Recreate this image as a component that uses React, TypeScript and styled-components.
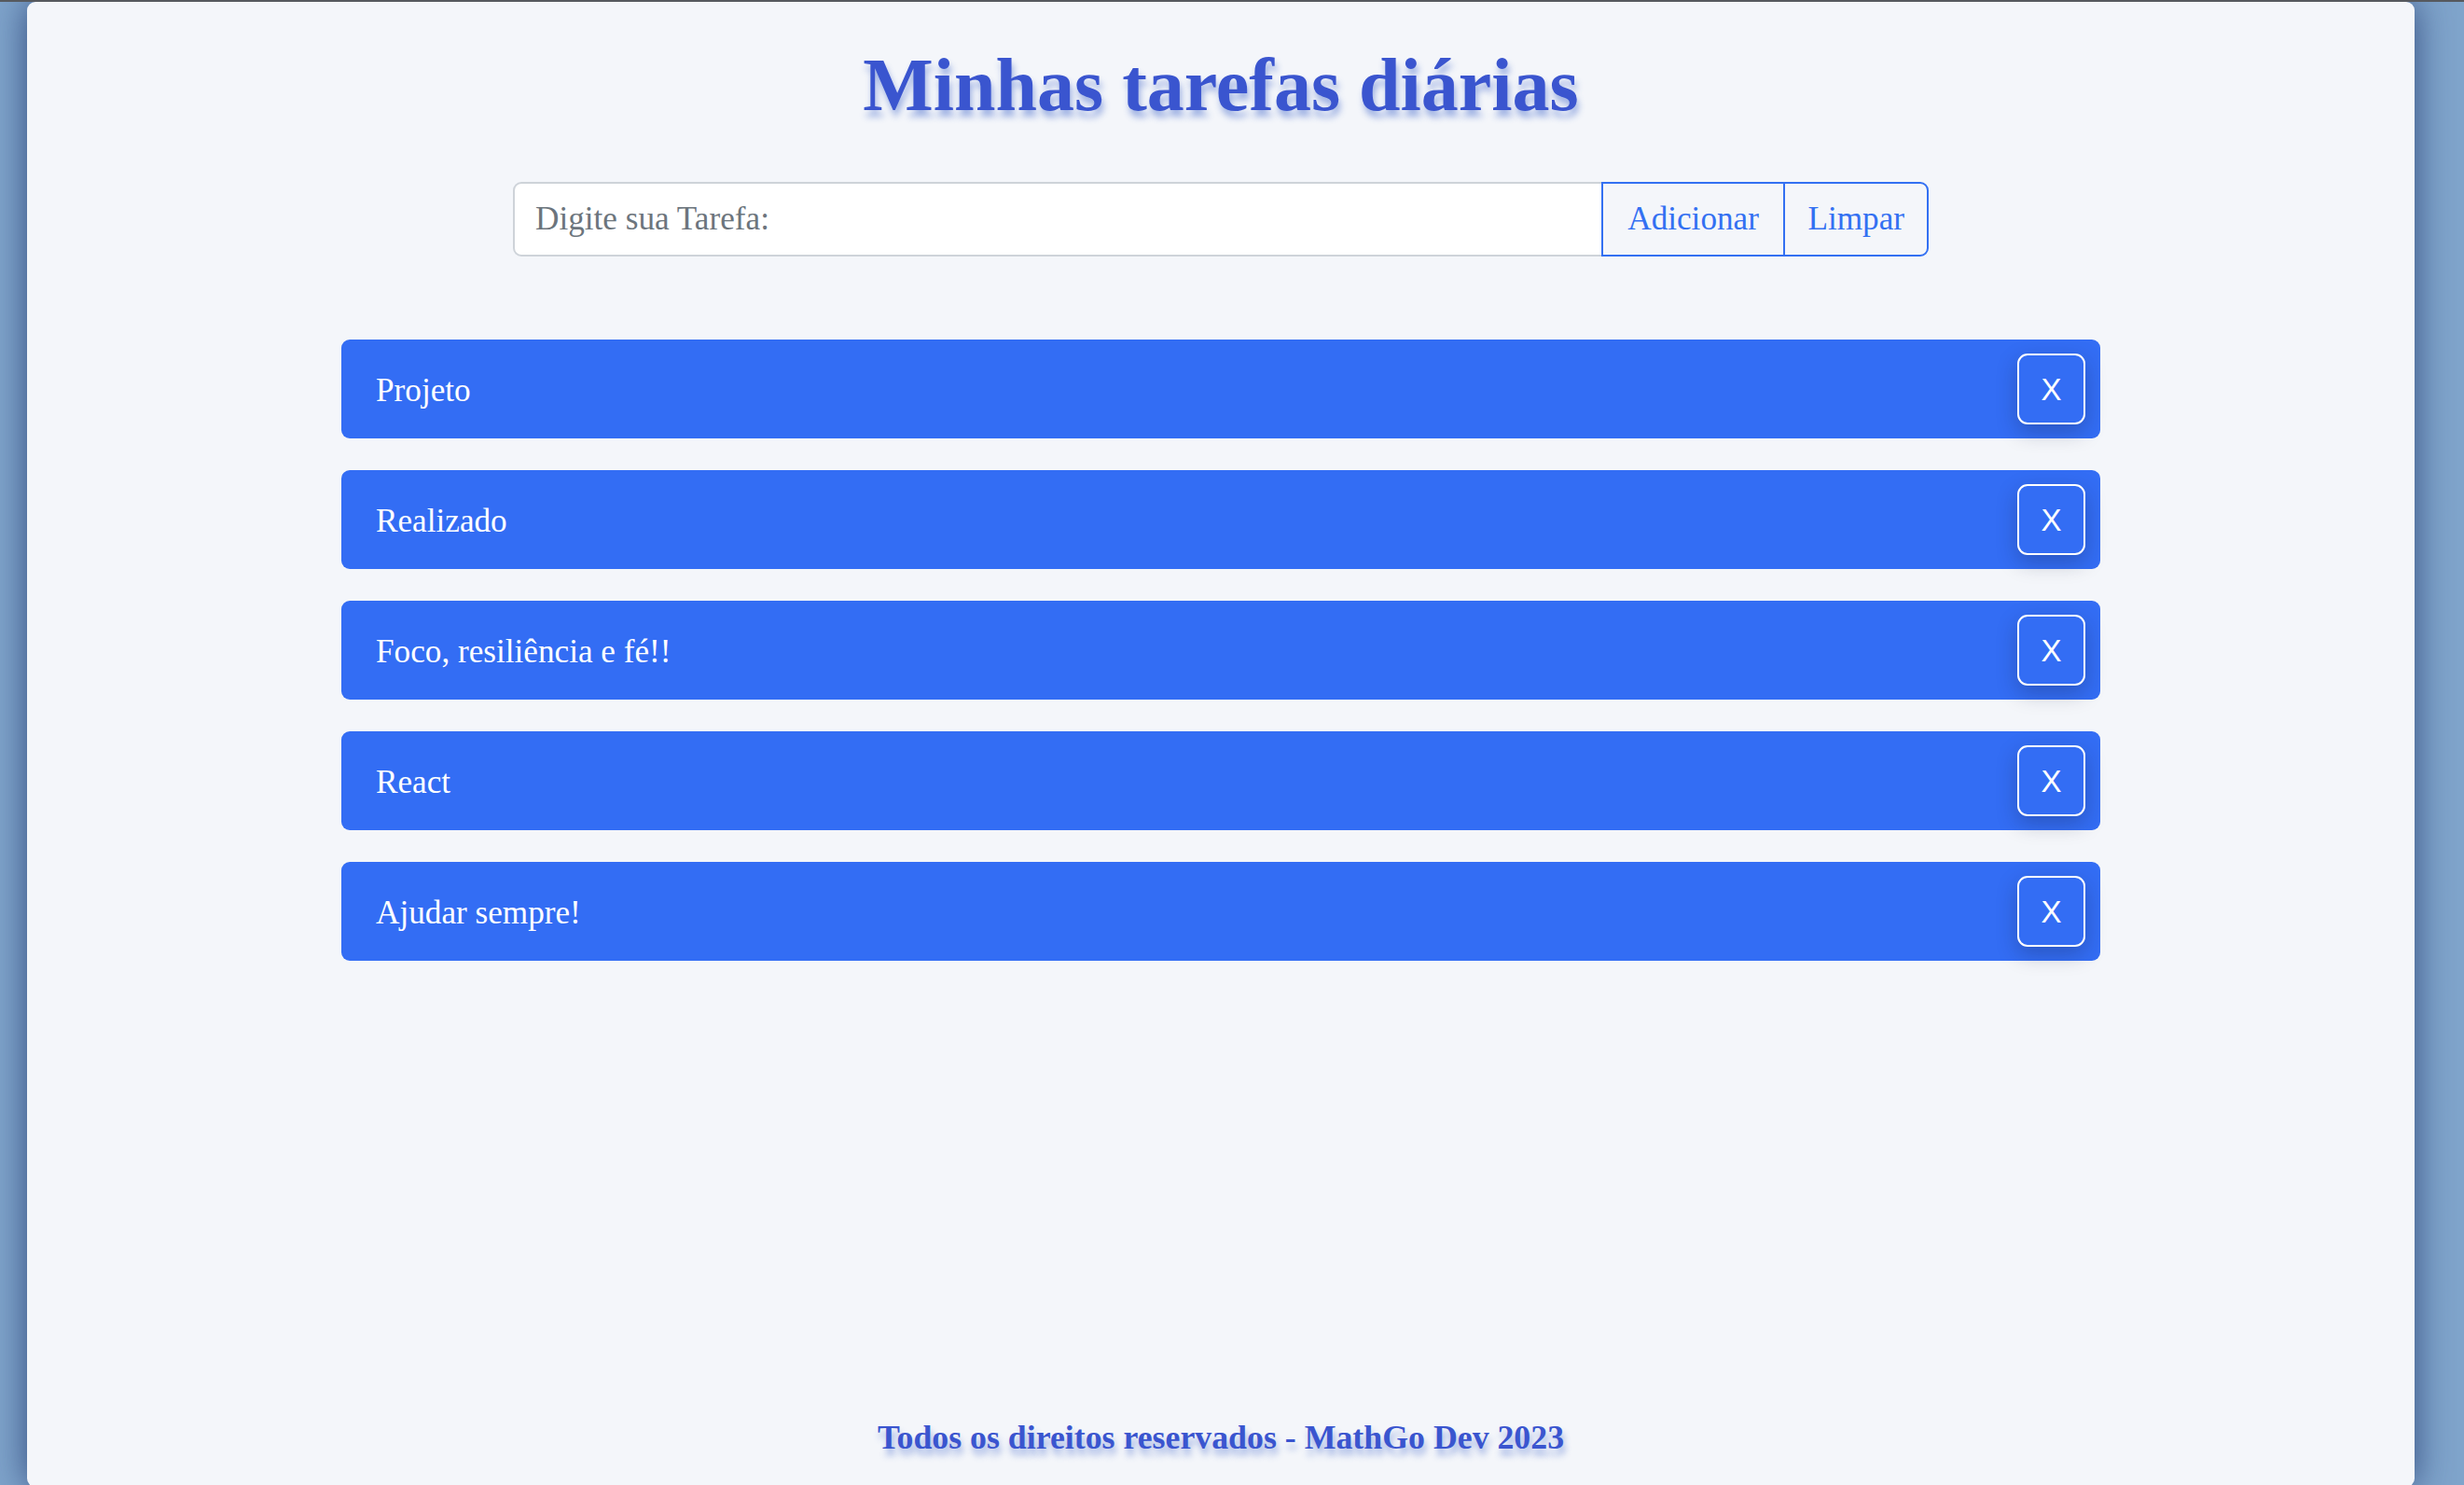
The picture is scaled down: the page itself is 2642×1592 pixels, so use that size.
import React from "react";
import styled, { createGlobalStyle } from "styled-components";

const GlobalStyle = createGlobalStyle`
  html, body {
    margin: 0;
    padding: 0;
  }
  body {
    background: #7fa4cb;
    border-top: 2px solid #56595e;
    font-family: "Liberation Serif", "Times New Roman", serif;
    overflow: hidden;
  }
  * { box-sizing: border-box; }
`;

const Page = styled.div`
  display: flex;
  padding-left: 29px;
`;

const Container = styled.main`
  width: 2560px;
  height: 1592px;
  background: #f4f6fa;
  border-radius: 9px;
  box-shadow: 0 0 38px rgba(25, 45, 100, 0.75);
  display: flex;
  flex-direction: column;
  align-items: center;
`;

const Title = styled.h1`
  margin: 45px 0 0;
  font-family: "Liberation Serif", "Times New Roman", serif;
  font-weight: 700;
  font-size: 80px;
  line-height: 1.107;
  color: #3a55cf;
  text-shadow: 2px 7px 7px rgba(55, 95, 200, 0.45);
`;

const InputGroup = styled.form`
  display: flex;
  width: 1518px;
  height: 80px;
  margin-top: 59px;
`;

const TaskInput = styled.input`
  flex: 1;
  min-width: 0;
  height: 100%;
  border: 2px solid #ced3d9;
  border-radius: 9px 0 0 9px;
  background: #ffffff;
  padding: 0 22px;
  font-family: "Liberation Serif", "Times New Roman", serif;
  font-size: 35.2px;
  color: #212529;
  outline: none;
  &::placeholder {
    color: #6c757d;
  }
`;

const GroupButton = styled.button<{ $last?: boolean }>`
  height: 100%;
  padding: 0 ${(p) => (p.$last ? "24px" : "26.5px")};
  margin-left: -2px;
  border: 2px solid #3370f2;
  background: transparent;
  color: #3370f2;
  font-family: "Liberation Serif", "Times New Roman", serif;
  font-size: 35.2px;
  border-radius: ${(p) => (p.$last ? "0 9px 9px 0" : "0")};
  cursor: pointer;
`;

const TaskList = styled.ul`
  list-style: none;
  margin: 89px 0 0;
  padding: 0;
  width: 1886px;
  display: flex;
  flex-direction: column;
  gap: 34px;
`;

const TaskRow = styled.li`
  height: 106px;
  background: #336df4;
  border-radius: 9px;
  display: flex;
  align-items: center;
  justify-content: space-between;
  padding: 0 16px 0 37px;
  color: #ffffff;
  font-family: "Liberation Serif", "Times New Roman", serif;
  font-size: 35.2px;
`;

const TaskText = styled.span`
  line-height: 1.2;
  padding-top: 5px;
`;

const RemoveButton = styled.button`
  width: 73px;
  height: 76px;
  border: 2px solid #ffffff;
  border-radius: 11px;
  background: #336df4;
  color: #ffffff;
  font-family: "Liberation Sans", Arial, sans-serif;
  font-size: 33px;
  line-height: 1;
  display: flex;
  align-items: center;
  justify-content: center;
  padding: 2px 0 0;
  box-shadow: 0 8px 22px rgba(20, 30, 60, 0.28);
  cursor: pointer;
`;

const Footer = styled.footer`
  margin-top: auto;
  margin-bottom: 33px;
  font-family: "Liberation Serif", "Times New Roman", serif;
  font-weight: 700;
  font-size: 35.8px;
  line-height: 1.12;
  color: #3a55cf;
  text-shadow: 2px 7px 7px rgba(55, 95, 200, 0.45);
`;

const tasks = [
  "Projeto",
  "Realizado",
  "Foco, resiliência e fé!!",
  "React",
  "Ajudar sempre!",
];

export default function App() {
  return (
    <>
      <GlobalStyle />
      <Page>
        <Container>
          <Title>Minhas tarefas diárias</Title>
          <InputGroup onSubmit={(e) => e.preventDefault()}>
            <TaskInput type="text" placeholder="Digite sua Tarefa:" />
            <GroupButton type="submit">Adicionar</GroupButton>
            <GroupButton type="button" $last>
              Limpar
            </GroupButton>
          </InputGroup>
          <TaskList>
            {tasks.map((t) => (
              <TaskRow key={t}>
                <TaskText>{t}</TaskText>
                <RemoveButton type="button">X</RemoveButton>
              </TaskRow>
            ))}
          </TaskList>
          <Footer>Todos os direitos reservados - MathGo Dev 2023</Footer>
        </Container>
      </Page>
    </>
  );
}
